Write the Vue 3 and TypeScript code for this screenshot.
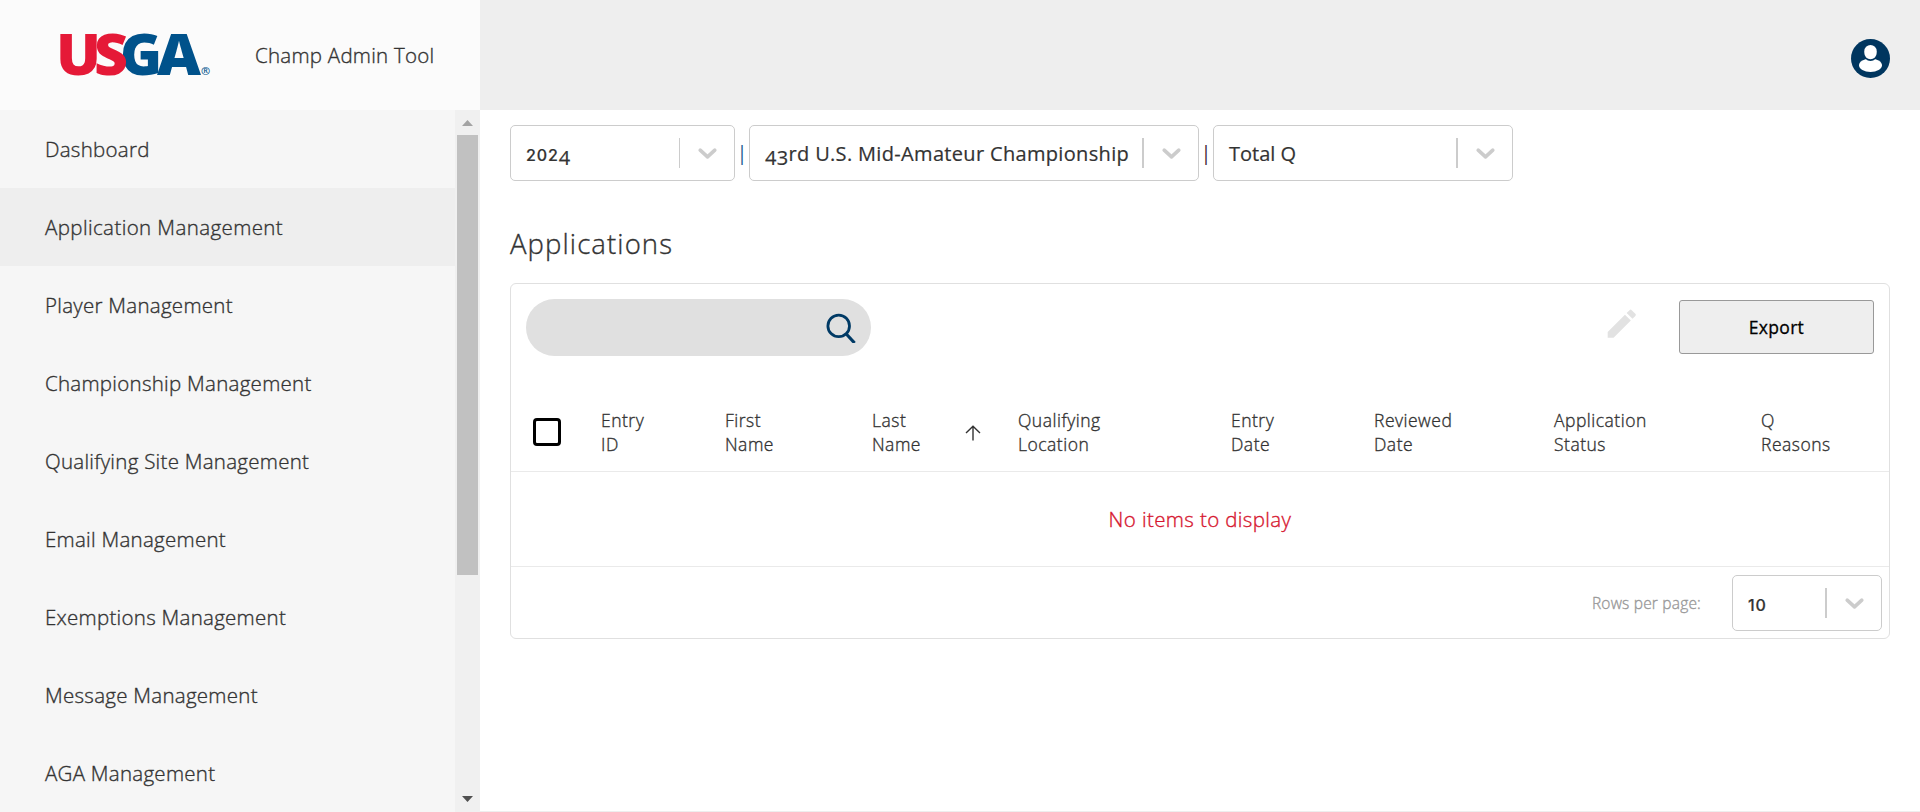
<script setup lang="ts">
interface Option { text: string; kind: string }

const navItems: string[] = [
  'Dashboard',
  'Application Management',
  'Player Management',
  'Championship Management',
  'Qualifying Site Management',
  'Email Management',
  'Exemptions Management',
  'Message Management',
  'AGA Management',
]
const activeItem = 'Application Management'

const filters: Option[] = [
  { text: '2024', kind: 'year' },
  { text: '43rd U.S. Mid-Amateur Championship', kind: 'championship' },
  { text: 'Total Q', kind: 'status' },
]

const columns: { lines: string[]; sorted?: boolean }[] = [
  { lines: ['Entry', 'ID'] },
  { lines: ['First', 'Name'] },
  { lines: ['Last', 'Name'], sorted: true },
  { lines: ['Qualifying', 'Location'] },
  { lines: ['Entry', 'Date'] },
  { lines: ['Reviewed', 'Date'] },
  { lines: ['Application', 'Status'] },
  { lines: ['Q', 'Reasons'] },
]

// Old-style numerals: 0-2 sit at x-height, the others hang below the baseline.
function pieces(text: string): { t: string; c: string }[] {
  return (text.match(/[012]+|[34579]+|[^0-9]+|./g) ?? []).map((t) => ({
    t,
    c: /^[012]/.test(t) ? 'num-small' : /^[34579]/.test(t) ? 'num-low' : '',
  }))
}
</script>

<template>
  <div class="app">
    <aside class="sidebar">
      <div class="brand">
        <svg class="logo" width="152" height="46" viewBox="0 0 152 46">
          <g font-family="Open Sans, sans-serif" font-weight="800" font-size="56">
            <text x="60" y="42" textLength="42" lengthAdjust="spacingAndGlyphs" class="blue">G</text>
            <text x="97" y="42" textLength="44" lengthAdjust="spacingAndGlyphs" class="blue">A</text>
            <text x="-4" y="42" textLength="45" lengthAdjust="spacingAndGlyphs" class="red">U</text>
            <text x="34" y="42" textLength="34" lengthAdjust="spacingAndGlyphs" class="red">S</text>
          </g>
          <text x="141" y="42" font-family="Open Sans, sans-serif" font-size="11" font-weight="600" class="blue">®</text>
        </svg>
        <span class="brand-name">Champ Admin Tool</span>
      </div>
      <div class="nav-wrap">
        <nav class="nav">
          <a v-for="item in navItems" :key="item" class="nav-item" :class="{ active: item === activeItem }">{{ item }}</a>
        </nav>
        <div class="scrollbar">
          <svg class="arrow" width="11" height="6" viewBox="0 0 11 6"><path d="M0 6 5.5 0 11 6z" fill="#a3a3a3" /></svg>
          <div class="thumb"></div>
          <svg class="arrow" width="11" height="6" viewBox="0 0 11 6"><path d="M0 0 5.5 6 11 0z" fill="#505050" /></svg>
        </div>
      </div>
    </aside>

    <div class="content">
      <header class="topbar">
        <svg width="39" height="39" viewBox="0 0 39 39">
          <circle cx="19.5" cy="19.5" r="19.5" fill="#00365f" />
          <ellipse cx="19.5" cy="26.3" rx="11.5" ry="6.8" fill="#fff" />
          <rect x="12.5" y="5" width="14" height="17" rx="7" fill="#00365f" />
          <rect x="13.3" y="6" width="12.4" height="14.3" rx="6.2" fill="#fff" />
        </svg>
      </header>

      <main class="main">
        <div class="filters">
          <template v-for="(f, i) in filters" :key="f.kind">
            <span v-if="i > 0" class="pipe" :class="'pipe-' + i">|</span>
            <div class="select" :class="f.kind">
              <span class="value"><span v-for="(p, j) in pieces(f.text)" :key="j" :class="p.c">{{ p.t }}</span></span>
              <span class="separator"></span>
              <svg class="chevron" width="25" height="25" viewBox="0 0 25 25"><path d="M5.2 9.2 12.5 15.8 19.8 9.2" /></svg>
            </div>
          </template>
        </div>

        <h1 class="title">Applications</h1>

        <section class="card">
          <div class="toolbar">
            <div class="search">
              <svg width="31" height="31" viewBox="0 0 31 31" fill="none" stroke="#003a65">
                <circle cx="12.7" cy="13.9" r="10.8" stroke-width="2.8" />
                <path d="M20.3 22 28.6 31" stroke-width="3.2" />
              </svg>
            </div>
            <svg class="edit" width="37.5" height="37.5" viewBox="0 0 24 24" fill="#e2e2e2"><path d="M3 17.25V21h3.75L17.81 9.94l-3.75-3.75L3 17.25zM20.71 7.04a1 1 0 0 0 0-1.41l-2.34-2.34a1 1 0 0 0-1.41 0l-1.83 1.83 3.75 3.75 1.83-1.83z" /></svg>
            <button class="export" type="button">Export</button>
          </div>

          <div class="table-head">
            <span class="checkbox"></span>
            <div v-for="(c, i) in columns" :key="i" class="col">
              <span class="label"><span v-for="l in c.lines" :key="l" class="line">{{ l }}</span></span>
              <svg v-if="c.sorted" class="sort" width="16" height="16" viewBox="0 0 16 16" fill="none" stroke="#333" stroke-width="1.4"><path d="M8 15.5V1.2M1 8 8 1.2 15 8" /></svg>
            </div>
          </div>

          <div class="empty">No items to display</div>

          <div class="pager">
            <span class="rows-label">Rows per page:</span>
            <div class="select page-size">
              <span class="value"><span class="num-small">10</span></span>
              <span class="separator"></span>
              <svg class="chevron" width="25" height="25" viewBox="0 0 25 25"><path d="M5.2 9.2 12.5 15.8 19.8 9.2" /></svg>
            </div>
          </div>
        </section>
      </main>
    </div>
  </div>
</template>

<style>
html, body { margin: 0; overflow: hidden; }
</style>

<style scoped>
* { box-sizing: border-box; }
.app { display: flex; width: 100%; height: 100vh; overflow: hidden; background: #fff; color: #333; font-family: "Open Sans", "Noto Sans", sans-serif; font-weight: 300; }
.brand-name, .nav-item, .title, .col, .empty, .rows-label { -webkit-text-stroke: 0.35px currentColor; }
.sidebar { width: 480px; height: 100%; flex: none; display: flex; flex-direction: column; background: #f6f6f6; }
.brand { height: 110px; flex: none; display: flex; align-items: center; padding-left: 60px; background: #fbfbfb; }
.logo { overflow: visible; flex: none; margin-top: 2px; }
.blue { fill: #00528b; }
.red { fill: #e51937; }
.brand-name { margin-left: 43px; font-size: 20.5px; letter-spacing: 0.25px; white-space: nowrap; }
.nav-wrap { flex: 1; min-height: 0; display: flex; }
.nav { flex: 1; overflow: hidden; }
.nav-item { display: flex; align-items: center; height: 78px; padding-left: 45px; font-size: 20.5px; letter-spacing: 0.27px; white-space: nowrap; }
.nav-item.active { background: #eee; letter-spacing: 0.4px; }
.scrollbar { width: 25px; display: flex; flex-direction: column; align-items: center; background: #f0f0f0; padding: 10px 0; }
.arrow { flex: none; display: block; }
.thumb { width: 21px; height: 440px; margin: 9px 0 auto; background: #c1c1c1; flex: none; }
.content { flex: 1; min-width: 0; display: flex; flex-direction: column; border-bottom: 1px solid #eee; }
.topbar { height: 110px; flex: none; display: flex; justify-content: flex-end; padding: 39px 30px 0 0; background: #eee; }
.main { flex: 1; padding: 15px 30px 0; }
.filters { display: flex; align-items: center; }
.pipe { width: 14px; text-align: center; font-size: 20px; line-height: 20px; color: #1c5c94; font-weight: 400; }
.pipe-2 { color: #41273a; }
.select { height: 56px; display: flex; align-items: center; padding: 0 14px 0 15px; border: 1px solid #ccc; border-radius: 5px; background: #fff; font-weight: 400; font-size: 20px; letter-spacing: 0.33px; -webkit-text-stroke: 0.2px currentColor; }
.year { width: 225px; }
.championship { width: 450px; }
.status { width: 300px; letter-spacing: 0; }
.page-size { width: 150px; }
.value { flex: 1; min-width: 0; white-space: nowrap; }
.num-small { font-family: Inter, "Open Sans", sans-serif; font-size: 16px; font-weight: 500; letter-spacing: 0.9px; }
.num-low { position: relative; top: 4px; font-size: 20px; }
.separator { width: 2px; height: 30px; margin: 0 15px 0 0; background: #ccc; flex: none; }
.year .separator { width: 1px; }
.chevron { flex: none; fill: none; stroke: #ccc; stroke-width: 3.6; stroke-linecap: round; stroke-linejoin: round; }
.title { margin: 43px 0 0; height: 59px; font-weight: 300; font-size: 27.5px; letter-spacing: 1.1px; line-height: 40px; }
.card { width: 100%; height: 356px; border: 1px solid #e0e0e0; border-radius: 6px; }
.toolbar { display: flex; align-items: flex-start; padding: 15px 15px 0; height: 115px; }
.search { width: 345px; height: 57px; display: flex; align-items: center; justify-content: flex-end; padding-right: 14px; border-radius: 29px; background: #e0e0e0; }
.edit { margin: 6px 39px 0 auto; flex: none; }
.export { width: 195px; height: 54px; margin-top: 1px; padding: 0; border: 1px solid #999; border-radius: 3px; background: #eee; color: #000; font-family: inherit; font-size: 17.5px; font-weight: 400; letter-spacing: 0.3px; -webkit-text-stroke: 0.3px #000; }
.table-head { height: 73px; display: grid; grid-template-columns: 90px 124px 147px 146px 213px 143px 180px 207px 1fr; border-bottom: 1px solid #eaeaea; }
.checkbox { width: 28px; height: 28px; margin: 19px 0 0 22px; border: 3px solid #000; border-radius: 4px; }
.col { display: flex; padding-top: 9px; font-size: 17.5px; letter-spacing: 0.5px; line-height: 24px; }
.label { flex: none; }
.line { display: block; }
.sort { margin: 17px 37px 0 auto; }
.empty { height: 95px; display: flex; align-items: center; justify-content: center; border-bottom: 1px solid #eaeaea; color: #d6162f; font-size: 20.5px; letter-spacing: 0.38px; }
.pager { display: flex; align-items: center; justify-content: flex-end; padding: 8px 7px 0 0; }
.rows-label { margin-right: 31px; font-size: 15.5px; letter-spacing: 0.2px; color: #999; }
</style>
